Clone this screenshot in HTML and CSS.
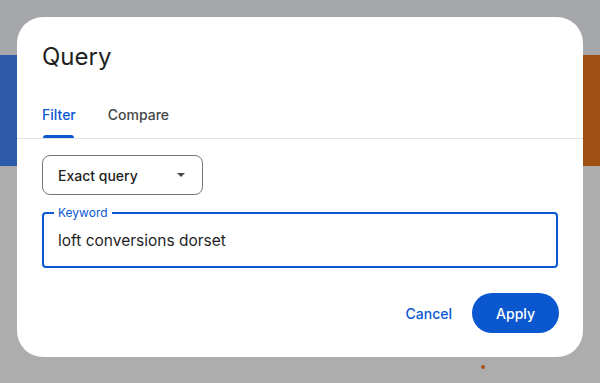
FILE: index.html
```html
<!DOCTYPE html>
<html>
<head>
<meta charset="utf-8">
<link rel="stylesheet" href="styles.css">
</head>
<body>
<div class="backdrop">
  <div class="bg-top"></div>
  <div class="bg-band">
    <div class="band-blue"></div>
    <div class="band-orange"></div>
  </div>
  <div class="bg-bottom"></div>
</div>
<span class="dot"></span>
<div class="dialog">
  <h1 class="title">Query</h1>
  <div class="tabs">
    <div class="tab active"><span class="tab-label">Filter</span></div>
    <div class="tab"><span class="tab-label">Compare</span></div>
  </div>
  <div class="divider"></div>
  <div class="body">
    <div class="select">
      <span class="select-text">Exact query</span>
      <span class="caret"></span>
    </div>
    <div class="field">
      <span class="field-label">Keyword</span>
      <span class="field-value">loft conversions dorset</span>
    </div>
  </div>
  <div class="actions">
    <button class="btn text">Cancel</button>
    <button class="btn filled">Apply</button>
  </div>
</div>
</body>
</html>
```
FILE: styles.css
```css
* { box-sizing: border-box; }
html, body { margin: 0; padding: 0; }
body {
  width: 600px;
  height: 383px;
  overflow: hidden;
  font-family: Inter, Roboto, "Liberation Sans", sans-serif;
  position: relative;
}
.backdrop {
  display: flex;
  flex-direction: column;
  height: 383px;
}
.bg-top { height: 55px; background: #a6a7aa; }
.bg-band { height: 111px; display: flex; justify-content: space-between; background: #adadad; }
.band-blue { width: 40px; background: #2e5ba9; }
.band-orange { width: 40px; background: #a04f12; }
.bg-bottom { flex: 1; background: #adadad; }
.dot {
  position: absolute;
  left: 481px;
  top: 365px;
  width: 4px;
  height: 4px;
  border-radius: 50%;
  background: #a5521a;
}
.dialog {
  position: absolute;
  left: 17px;
  top: 17px;
  width: 566px;
  height: 340px;
  background: #ffffff;
  border-radius: 26px;
  padding: 24px 0 24px 0;
  display: flex;
  flex-direction: column;
}
.title {
  margin: 0 0 17px 25px;
  font-size: 24px;
  line-height: 32px;
  font-weight: 400;
  color: #1f1f1f;
}
.tabs {
  display: flex;
  gap: 32px;
  padding-left: 25px;
  height: 48px;
}
.tab {
  position: relative;
  display: flex;
  align-items: center;
  font-size: 14px;
  font-weight: 470;
  color: #444746;
}
.tab.active { color: #0b57d0; }
.tab.active::after {
  content: "";
  position: absolute;
  left: 1px;
  right: 2px;
  bottom: 0;
  height: 3px;
  border-radius: 3px 3px 0 0;
  background: #0b57d0;
}
.divider { height: 1px; background: #e1e3e1; }
.body {
  padding: 16px 25px 0 25px;
  display: flex;
  flex-direction: column;
  gap: 17px;
}
.select {
  width: 161px;
  height: 40px;
  border: 1px solid #747775;
  border-radius: 8px;
  display: flex;
  align-items: center;
  justify-content: space-between;
  padding: 0 17px 0 15px;
  font-size: 14px;
  font-weight: 470;
  color: #1f1f1f;
}
.caret {
  width: 0;
  height: 0;
  border-left: 4px solid transparent;
  border-right: 4px solid transparent;
  border-top: 4px solid #444746;
}
.field {
  position: relative;
  width: 516px;
  height: 56px;
  border: 2px solid #0b57d0;
  border-radius: 4px;
  display: flex;
  align-items: center;
  padding-left: 14px;
}
.field-label {
  position: absolute;
  left: 10px;
  top: -9px;
  padding: 0 4px;
  background: #ffffff;
  font-size: 12px;
  line-height: 16px;
  color: #0b57d0;
}
.field-value {
  font-size: 15.5px;
  color: #1f1f1f;
}
.actions {
  margin-top: 25px;
  padding-right: 24px;
  display: flex;
  justify-content: flex-end;
  gap: 8px;
}
.btn {
  height: 40px;
  border: none;
  border-radius: 20px;
  font-family: Inter, Roboto, "Liberation Sans", sans-serif;
  font-size: 14px;
  font-weight: 470;
  cursor: pointer;
}
.btn.text {
  background: transparent;
  color: #0b57d0;
  padding: 0 12px;
}
.btn.filled {
  background: #0b57d0;
  color: #ffffff;
  padding: 0 24px;
}
```
